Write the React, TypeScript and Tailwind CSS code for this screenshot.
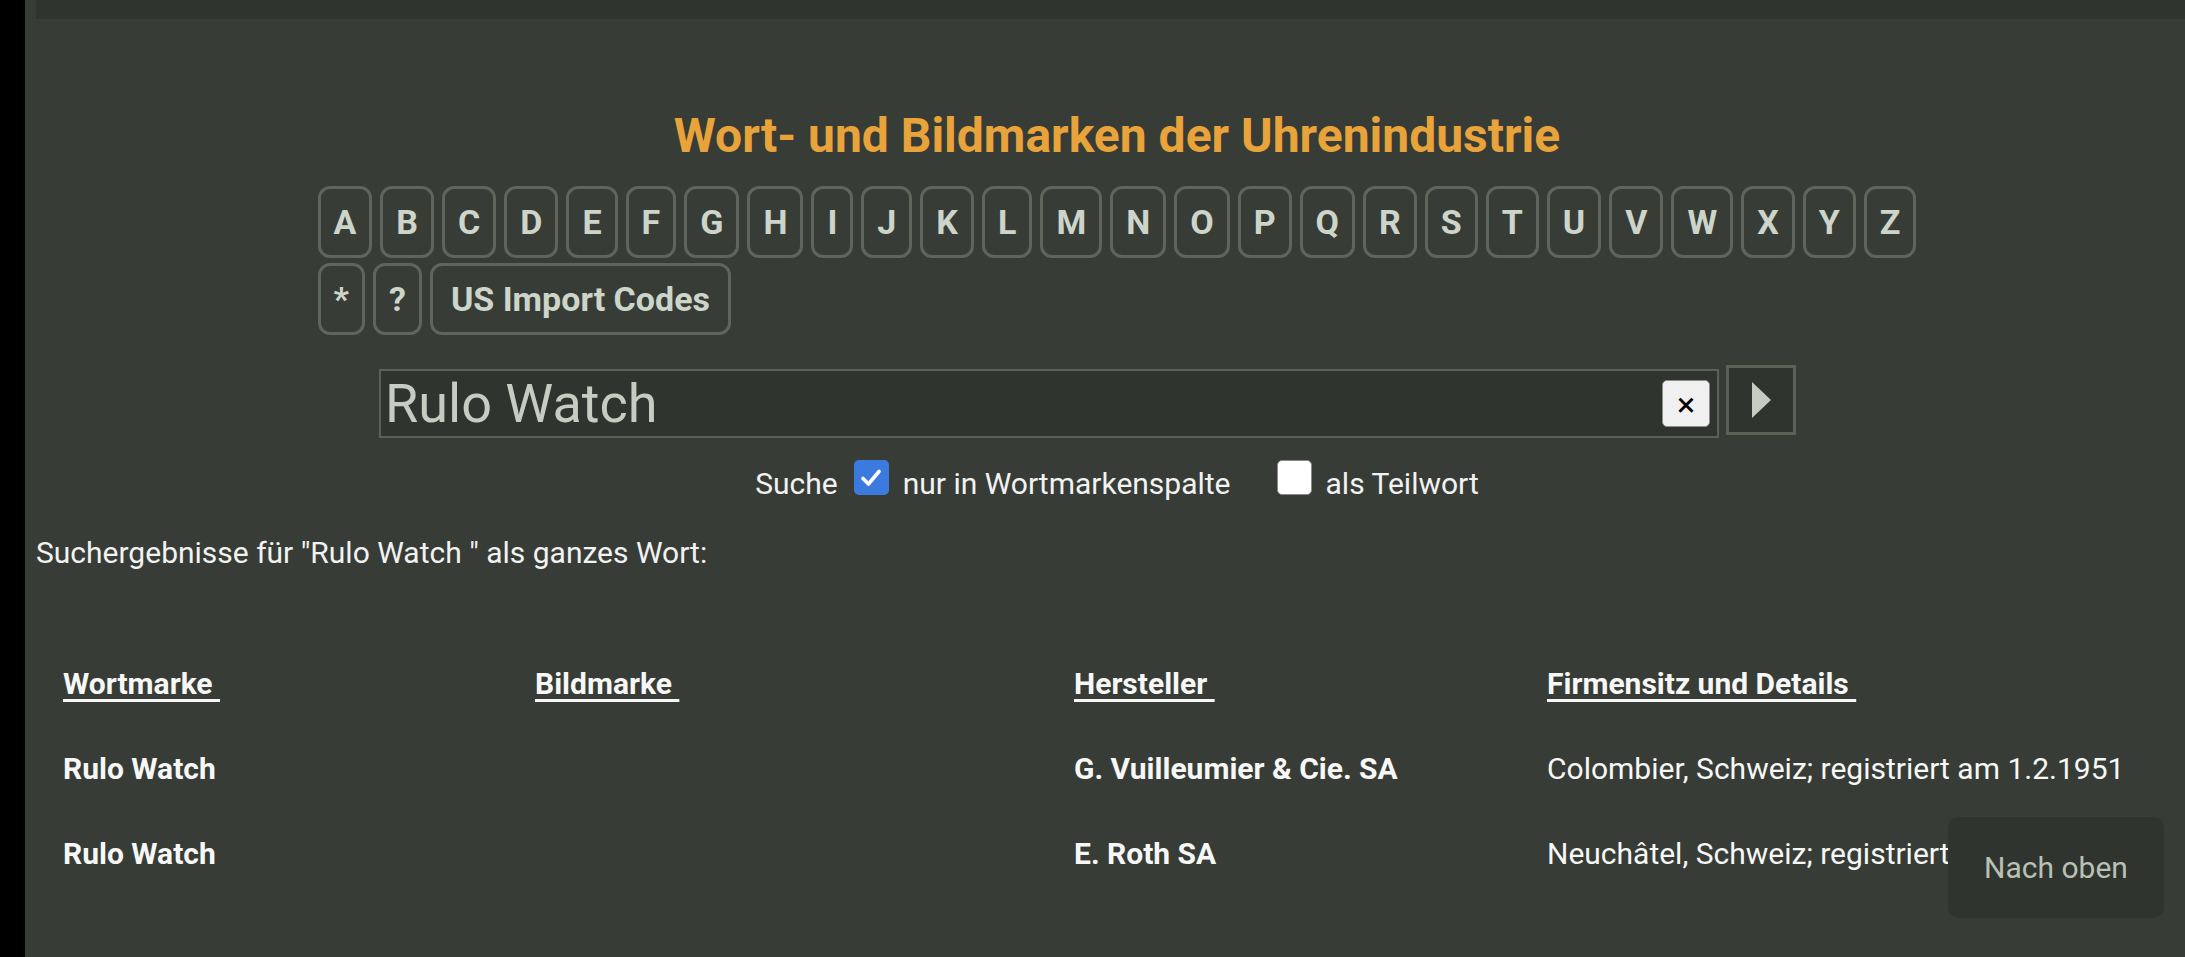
import React from "react";

const LETTERS = "ABCDEFGHIJKLMNOPQRSTUVWXYZ".split("");

function KeyButton({ label, wide }: { label: string; wide?: boolean }) {
  return (
    <div
      className={
        wide
          ? "flex h-[72px] items-center justify-center rounded-[12px] border-[3px] border-[#5e655a] px-[18px] text-[34px] font-bold leading-none text-[#cdd5ca]"
          : "flex h-[72px] items-center justify-center rounded-[12px] border-[3px] border-[#5e655a] px-[13px] text-[34px] font-bold leading-none text-[#cdd5ca]"
      }
    >
      {label}
    </div>
  );
}

function CheckedBox() {
  return (
    <div className="flex h-[35px] w-[35px] items-center justify-center rounded-[5px] bg-[#3b7be0]">
      <svg width="24" height="24" viewBox="0 0 24 24">
        <path d="M4 12.5 L9.5 18 L20 5.5" fill="none" stroke="#ffffff" strokeWidth="3.6" strokeLinecap="round" strokeLinejoin="round" />
      </svg>
    </div>
  );
}

function UncheckedBox() {
  return <div className="h-[35px] w-[35px] rounded-[5px] border border-[#8a8a8a] bg-white" />;
}

export default function App() {
  const rows = [
    ["Rulo Watch", "", "G. Vuilleumier & Cie. SA", "Colombier, Schweiz; registriert am 1.2.1951"],
    ["Rulo Watch", "", "E. Roth SA", "Neuchâtel, Schweiz; registriert am 5.3.1952"],
  ];
  return (
    <div className="flex h-[957px] w-full overflow-hidden bg-black font-['Roboto',sans-serif]">
      <div className="w-[25px] shrink-0 bg-black" />
      <div className="relative flex-1 bg-[#373d36]">
        <div className="ml-[11px] h-[19px] bg-[#2f342e]" />

        <div className="pl-[24px]">
          <h1 className="mt-[89px] text-center text-[48px] font-bold leading-[56px] text-[#e9a33b]">
            Wort- und Bildmarken der Uhrenindustrie
          </h1>
          <div className="mt-[22px] flex justify-center">
            <div className="flex flex-col items-start gap-[5px]">
              <div className="flex gap-[8px]">
                {LETTERS.map((l) => (
                  <KeyButton key={l} label={l} />
                ))}
              </div>
              <div className="flex gap-[8px]">
                <KeyButton label="*" />
                <KeyButton label="?" />
                <KeyButton label="US Import Codes" wide />
              </div>
            </div>
          </div>
        </div>

        <div className="ml-[354px] mt-[30px] flex items-start gap-[7px]">
          <div className="mt-[4px] flex h-[69px] w-[1340px] items-center justify-between border-2 border-[#5a6157] bg-[#2f342e] pl-[4px] pr-[7px]">
            <span className="text-[54px] leading-[63px] text-[#c5cdc2]">Rulo Watch</span>
            <div className="flex h-[47px] w-[48px] items-center justify-center rounded-[5px] border border-[#8d8d8d] bg-[#f0f0f0] text-[34px] leading-none text-black">
              ×
            </div>
          </div>
          <div className="flex h-[70px] w-[70px] items-center justify-center border-[3px] border-[#5a6157] bg-[#2f342e]">
            <svg width="19" height="36" viewBox="0 0 19 36">
              <polygon points="0,0 19,18 0,36" fill="#c5cdc2" />
            </svg>
          </div>
        </div>

        <div className="mt-[22px] flex items-start justify-center pl-[24px] text-[30px] leading-[36px] text-[#f2f2f2]">
          <span className="mt-[6px]">Suche</span>
          <div className="ml-[16px]">
            <CheckedBox />
          </div>
          <span className="ml-[14px] mt-[6px]">nur in Wortmarkenspalte</span>
          <div className="ml-[46px]">
            <UncheckedBox />
          </div>
          <span className="ml-[14px] mt-[6px]">als Teilwort</span>
        </div>

        <p className="ml-[11px] mt-[33px] text-[30px] leading-[36px] text-[#f2f2f2]">
          Suchergebnisse für "Rulo Watch " als ganzes Wort:
        </p>

        <div className="ml-[38px] mt-[95px] grid grid-cols-[472px_539px_473px_1fr] gap-y-[49px] text-[30px] leading-[36px] text-[#f7f7f7]">
          {["Wortmarke", "Bildmarke", "Hersteller", "Firmensitz und Details"].map((h) => (
            <div key={h} className="font-bold">
              <span className="underline decoration-[3px] underline-offset-[5px]">{h + "\u00a0"}</span>
            </div>
          ))}
          {rows.map((r, i) => (
            <React.Fragment key={i}>
              <div className="font-bold">{r[0]}</div>
              <div>{r[1]}</div>
              <div className="font-bold">{r[2]}</div>
              <div className="whitespace-nowrap">{r[3]}</div>
            </React.Fragment>
          ))}
        </div>

        <div className="absolute bottom-[39px] right-[21px] flex h-[101px] w-[216px] items-center justify-center rounded-[10px] bg-[#2f342e] text-[30px] text-[#b9c0b6]">
          Nach oben
        </div>
      </div>
    </div>
  );
}
